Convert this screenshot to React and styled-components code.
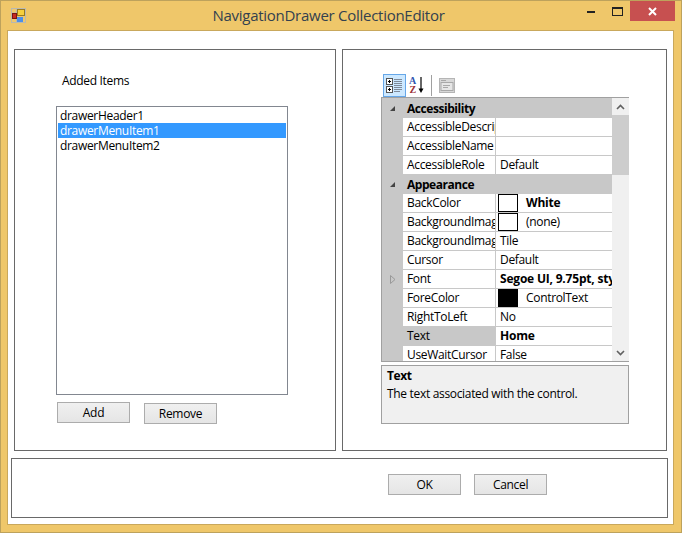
import React from 'react'
import styled, { createGlobalStyle } from 'styled-components'

const Global = createGlobalStyle`
	html, body {
		margin: 0;
		padding: 0;
		background: #efc76a;
	}
	* {
		box-sizing: border-box;
	}
`

const Win = styled.div`
	width: 682px;
	height: 533px;
	display: flex;
	flex-direction: column;
	background: #efc76a;
	border: 1px solid #bda25c;
	font-family: "Open Sans", "Noto Sans", sans-serif;
	font-size: 12px;
	letter-spacing: -0.32px;
	color: #000;
	overflow: hidden;
`

const TitleBar = styled.div`
	height: 29px;
	flex: none;
	display: flex;
	align-items: flex-start;
	padding-left: 10px;
`

const AppIcon = styled.svg`
	width: 15px;
	height: 15px;
	margin-top: 7px;
	flex: none;
`

const Title = styled.div`
	flex: 1;
	padding-top: 4px;
	padding-left: 53px;
	text-align: center;
	font-size: 15px;
	letter-spacing: -0.27px;
	line-height: 20px;
	color: #33414f;
	white-space: nowrap;
`

const Caption = styled.div`
	display: flex;
	align-items: flex-start;
	flex: none;
	margin-right: 6px;
`

const CapBtn = styled.div`
	width: ${p => p.$w}px;
	height: 20px;
	display: flex;
	align-items: center;
	justify-content: center;
	background: ${p => p.$close ? '#c75050' : 'transparent'};
`

const Client = styled.div`
	flex: none;
	width: 667px;
	height: 495px;
	margin-left: 6px;
	background: #fff;
	border: 1px solid #c9a85c;
	padding: 18px 0 0 3px;
`

const Columns = styled.div`
	display: flex;
	gap: 6px;
	margin-left: 3px;
`

const Panel = styled.div`
	width: ${p => p.$w}px;
	height: 402px;
	border: 1px solid #696969;
	background: #fff;
	padding: ${p => p.$pad || 0};
`

const AddedLabel = styled.div`
	margin-left: 47px;
	height: 56px;
	line-height: 17px;
	padding-top: 22px;
`

const ListBox = styled.div`
	width: 232px;
	height: 289px;
	margin-left: 41px;
	border: 1px solid #828790;
	padding: 1px;
`

const ListItem = styled.div`
	height: 15px;
	line-height: 15px;
	padding-left: 2px;
	white-space: nowrap;
	background: ${p => p.$sel ? '#3399ff' : '#fff'};
	color: ${p => p.$sel ? '#fff' : '#000'};
`

const BtnRow = styled.div`
	display: flex;
	align-items: flex-start;
	gap: 14px;
	margin: 7px 0 0 42px;
`

const Btn = styled.div`
	width: 73px;
	height: 21px;
	margin-top: ${p => p.$drop || 0}px;
	display: flex;
	align-items: center;
	justify-content: center;
	border: 1px solid #acacac;
	background: linear-gradient(to bottom, #f0f0f0, #e5e5e5);
	line-height: 17px;
`

const Toolbar = styled.div`
	display: flex;
	align-items: center;
	height: 24px;
	margin-left: 40px;
`

const ToolBtn = styled.div`
	width: ${p => p.$w || 23}px;
	height: 23px;
	display: flex;
	align-items: center;
	justify-content: center;
	background: ${p => p.$on ? '#cce8ff' : 'transparent'};
	border: ${p => p.$on ? '1px solid #66a7e8' : 'none'};
`

const ToolSep = styled.div`
	width: 1px;
	height: 21px;
	background: #a0a0a0;
	margin: 0 6px 0 3px;
`

const Grid = styled.div`
	width: 248px;
	height: 265px;
	margin-left: 38px;
	border: 1px solid #a0a0a0;
	display: flex;
	background: #fff;
`

const Rows = styled.div`
	width: 230px;
	height: 263px;
	overflow: hidden;
	flex: none;
`

const Cat = styled.div`
	height: ${p => p.$h || 19}px;
	display: flex;
	align-items: center;
	background: #c8c8c8;
	font-weight: 700;
	letter-spacing: -0.45px;
`

const CatName = styled.span`
	margin-left: 4px;
`

const Gutter = styled.div`
	width: 21px;
	height: 100%;
	flex: none;
	display: flex;
	align-items: center;
	justify-content: center;
	background: #c8c8c8;
`

const Row = styled.div`
	height: 19px;
	display: flex;
`

const NameCell = styled.div`
	width: 93px;
	flex: none;
	padding-left: 4px;
	line-height: 18px;
	overflow: hidden;
	white-space: nowrap;
	border-bottom: 1px solid #c8c8c8;
	border-right: 1px solid #c8c8c8;
	background: ${p => p.$sel ? '#c8c8c8' : '#fff'};
`

const ValueCell = styled.div`
	flex: 1;
	min-width: 0;
	display: flex;
	align-items: flex-start;
	padding-left: 4px;
	line-height: 18px;
	overflow: hidden;
	white-space: nowrap;
	border-bottom: 1px solid #c8c8c8;
	font-weight: ${p => p.$bold ? 700 : 400};
	letter-spacing: ${p => p.$bold ? '-0.2px' : 'inherit'};
`

const Swatch = styled.span`
	width: 20px;
	height: 18px;
	flex: none;
	margin: 0 8px 0 -2px;
	border: 1px solid #000;
	background: ${p => p.$c};
`

const ScrollBar = styled.div`
	width: 17px;
	height: 263px;
	flex: none;
	display: flex;
	flex-direction: column;
	background: #f0f0f0;
`

const ScrollArrow = styled.div`
	height: 17px;
	flex: none;
	display: flex;
	align-items: center;
	justify-content: center;
`

const Thumb = styled.div`
	height: 60px;
	flex: none;
	background: #cdcdcd;
`

const ScrollGap = styled.div`
	flex: 1;
`

const Help = styled.div`
	width: 248px;
	height: 59px;
	margin: 3px 0 0 38px;
	border: 1px solid #a0a0a0;
	background: #f0f0f0;
	padding: 1px 5px;
	line-height: 17px;
`

const HelpTitle = styled.div`
	font-weight: 700;
	letter-spacing: -0.45px;
	margin-bottom: 1px;
`

const Footer = styled.div`
	width: 657px;
	height: 60px;
	margin-top: 7px;
	border: 1px solid #696969;
	display: flex;
	gap: 13px;
	padding: 15px 0 0 376px;
`

const CatArrow = () => (
	<svg width="7" height="7" viewBox="0 0 7 7">
		<path d="M6 1 L6 6 L1 6 Z" fill="#444" />
	</svg>
)

const items = [
	{ type: 'cat', name: 'Accessibility', h: 20 },
	{ name: 'AccessibleDescription' },
	{ name: 'AccessibleName' },
	{ name: 'AccessibleRole', value: 'Default' },
	{ type: 'cat', name: 'Appearance' },
	{ name: 'BackColor', value: 'White', bold: true, swatch: '#fff' },
	{ name: 'BackgroundImage', value: '(none)', swatch: '#fff' },
	{ name: 'BackgroundImageLayout', value: 'Tile' },
	{ name: 'Cursor', value: 'Default' },
	{ name: 'Font', value: 'Segoe UI, 9.75pt, style=Bold', bold: true, expand: true },
	{ name: 'ForeColor', value: 'ControlText', swatch: '#000' },
	{ name: 'RightToLeft', value: 'No' },
	{ name: 'Text', value: 'Home', bold: true, sel: true },
	{ name: 'UseWaitCursor', value: 'False' },
]

const App = () => {
	return (
		<Win>
			<Global />
			<TitleBar>
				<AppIcon viewBox="0 0 15 15">
					<rect x="0.5" y="0.5" width="14" height="14" fill="none" stroke="#b9b9b0" />
					<path d="M5.5 0 V15 M0 5 H5 M0 10.5 H6" stroke="#b9b9b0" />
					<rect x="1.5" y="5.5" width="4" height="5" fill="#c62a22" stroke="#7a1512" />
					<rect x="6.5" y="1.5" width="7" height="6" fill="#f6cf3c" stroke="#9a7a20" />
					<rect x="6" y="9" width="6" height="5" fill="#4c8fe8" />
				</AppIcon>
				<Title>NavigationDrawer CollectionEditor</Title>
				<Caption>
					<CapBtn $w={26}>
						<svg width="8" height="3" viewBox="0 0 8 3"><rect width="8" height="2" y="1" fill="#222" /></svg>
					</CapBtn>
					<CapBtn $w={26}>
						<svg width="11" height="9" viewBox="0 0 11 9">
							<rect x="0.5" y="0.5" width="10" height="8" fill="none" stroke="#222" />
							<rect width="11" height="2" fill="#222" />
						</svg>
					</CapBtn>
					<CapBtn $w={45} $close>
						<svg width="9" height="9" viewBox="0 0 9 9">
							<path d="M1 1 L8 8 M8 1 L1 8" stroke="#fff" strokeWidth="2" />
						</svg>
					</CapBtn>
				</Caption>
			</TitleBar>
			<Client>
				<Columns>
					<Panel $w={322}>
						<AddedLabel>Added Items</AddedLabel>
						<ListBox>
							<ListItem>drawerHeader1</ListItem>
							<ListItem $sel>drawerMenuItem1</ListItem>
							<ListItem>drawerMenuItem2</ListItem>
						</ListBox>
						<BtnRow>
							<Btn>Add</Btn>
							<Btn $drop={1}>Remove</Btn>
						</BtnRow>
					</Panel>
					<Panel $w={325} $pad="23px 0 0 0">
						<Toolbar>
							<ToolBtn $on>
								<svg width="17" height="17" viewBox="0 0 17 17">
									<rect x="0.5" y="1.5" width="6" height="6" fill="#fff" stroke="#555" />
									<path d="M2 4.5 H5 M3.5 3 V6" stroke="#000" />
									<rect x="0.5" y="9.5" width="6" height="6" fill="#fff" stroke="#555" />
									<path d="M2 12.5 H5 M3.5 11 V14" stroke="#000" />
									<path d="M8 2.5 H16 M8 4.5 H16 M8 6.5 H16 M8 8.5 H16 M8 10.5 H16 M8 12.5 H16 M8 14.5 H14" stroke="#7f8a99" />
								</svg>
							</ToolBtn>
							<ToolBtn $w={22}>
								<svg width="18" height="18" viewBox="0 0 18 18">
									<text x="1" y="8" fontFamily="Liberation Serif, serif" fontWeight="700" fontSize="10" fill="#2f56b0">A</text>
									<text x="1.5" y="17" fontFamily="Liberation Serif, serif" fontWeight="700" fontSize="10" fill="#9b2f35">Z</text>
									<path d="M13 1 V15" stroke="#000" strokeWidth="1.2" />
									<path d="M10.5 12.5 L13 17 L15.5 12.5 Z" fill="#000" />
								</svg>
							</ToolBtn>
							<ToolSep />
							<ToolBtn $w={17}>
								<svg width="16" height="15" viewBox="0 0 16 15">
									<rect x="0.5" y="0.5" width="15" height="14" fill="#d8d8d8" stroke="#b5b5b5" />
									<rect x="2" y="4.5" width="12" height="8" fill="#e6e6e6" stroke="#a8a8a8" />
									<path d="M2 2.5 H7 M4 7.5 H11 M4 9.5 H9" stroke="#a8a8a8" />
								</svg>
							</ToolBtn>
						</Toolbar>
						<Grid>
							<Rows>
								{items.map(it => it.type === 'cat' ? (
									<Cat key={it.name} $h={it.h}>
										<Gutter><CatArrow /></Gutter>
										<CatName>{it.name}</CatName>
									</Cat>
								) : (
									<Row key={it.name}>
										<Gutter>
											{it.expand && (
												<svg width="7" height="9" viewBox="0 0 7 9">
													<path d="M1.5 0.5 L6 4.5 L1.5 8.5 Z" fill="none" stroke="#999" />
												</svg>
											)}
										</Gutter>
										<NameCell $sel={it.sel}>{it.name}</NameCell>
										<ValueCell $bold={it.bold}>
											{it.swatch && <Swatch $c={it.swatch} />}
											{it.value}
										</ValueCell>
									</Row>
								))}
							</Rows>
							<ScrollBar>
								<ScrollArrow>
									<svg width="9" height="6" viewBox="0 0 9 6">
										<path d="M1 5 L4.5 1.5 L8 5" fill="none" stroke="#606060" strokeWidth="1.6" />
									</svg>
								</ScrollArrow>
								<Thumb />
								<ScrollGap />
								<ScrollArrow>
									<svg width="9" height="6" viewBox="0 0 9 6">
										<path d="M1 1 L4.5 4.5 L8 1" fill="none" stroke="#606060" strokeWidth="1.6" />
									</svg>
								</ScrollArrow>
							</ScrollBar>
						</Grid>
						<Help>
							<HelpTitle>Text</HelpTitle>
							The text associated with the control.
						</Help>
					</Panel>
				</Columns>
				<Footer>
					<Btn>OK</Btn>
					<Btn>Cancel</Btn>
				</Footer>
			</Client>
		</Win>
	)
}

export default App
